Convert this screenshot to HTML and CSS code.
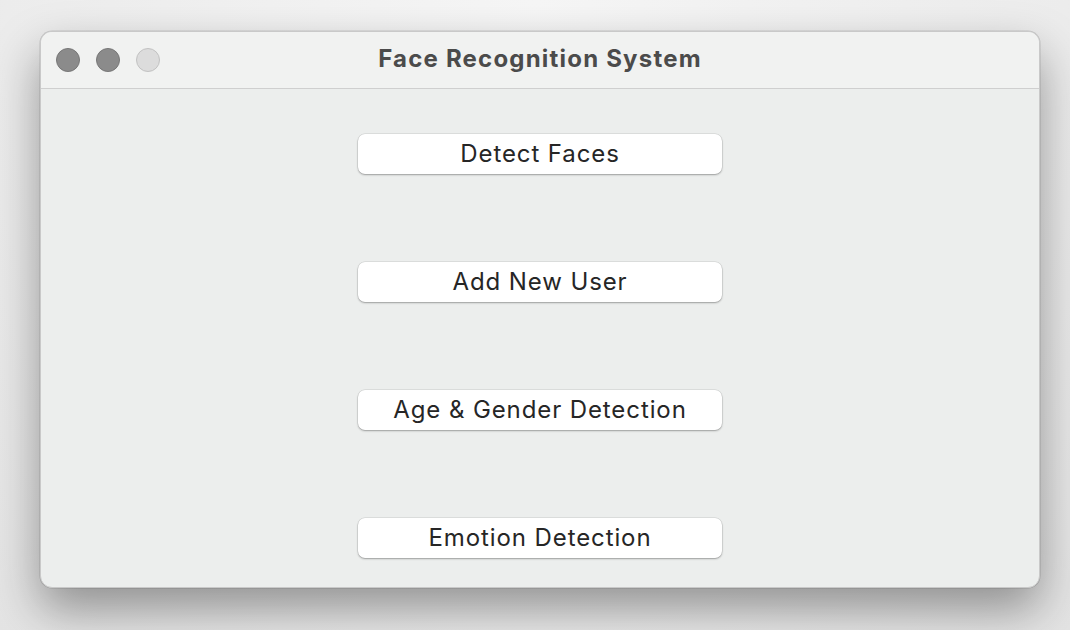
FILE: index.html
```html
<!DOCTYPE html>
<html>
<head>
<meta charset="utf-8">
<link rel="stylesheet" href="styles.css">
</head>
<body>
<div class="window">
  <div class="titlebar">
    <div class="lights">
      <span class="light dark"></span>
      <span class="light dark"></span>
      <span class="light pale"></span>
    </div>
    <div class="title">Face Recognition System</div>
  </div>
  <div class="content">
    <button class="btn">Detect Faces</button>
    <button class="btn">Add New User</button>
    <button class="btn">Age &amp; Gender Detection</button>
    <button class="btn">Emotion Detection</button>
  </div>
</div>
</body>
</html>
```
FILE: styles.css
```css
html, body {
  margin: 0;
  height: 100%;
}
body {
  background: radial-gradient(ellipse at 50% 0%, #f6f6f6 0%, #ececec 70%, #e4e4e4 100%);
  padding: 31px 0 0 40px;
  box-sizing: border-box;
  overflow: hidden;
  font-family: Inter, "Noto Sans", sans-serif;
}
.window {
  width: 1000px;
  height: 557px;
  box-sizing: border-box;
  border-radius: 12px;
  background: #eceeed;
  border: 1px solid #c9c9c9;
  box-shadow: 0 22px 48px rgba(0, 0, 0, 0.38), 0 0 0 0.5px rgba(0,0,0,0.15);
  display: flex;
  flex-direction: column;
  overflow: hidden;
}
.titlebar {
  height: 57px;
  flex: none;
  box-sizing: border-box;
  background: #f1f2f1;
  border-bottom: 1px solid #cfcfcf;
  position: relative;
  display: flex;
  align-items: center;
  justify-content: center;
}
.lights {
  position: absolute;
  left: 15px;
  top: 16px;
  display: flex;
  gap: 16px;
}
.light {
  width: 24px;
  height: 24px;
  border-radius: 50%;
  box-sizing: border-box;
}
.light.dark {
  background: #8b8b8b;
  border: 1px solid #777;
}
.light.pale {
  background: #dcdcdc;
  border: 1px solid #c2c2c2;
}
.title {
  font-weight: 700;
  font-size: 24px;
  color: #4b4b4b;
  letter-spacing: 1.2px;
  padding-bottom: 3px;
}
.content {
  flex: 1;
  display: flex;
  flex-direction: column;
  align-items: center;
  padding-top: 45px;
  gap: 88px;
}
.btn {
  width: 364px;
  height: 40px;
  background: #ffffff;
  border: none;
  border-radius: 7px;
  box-shadow: 0 1px 2px rgba(0,0,0,0.3), 0 0 0 0.5px rgba(0,0,0,0.12);
  font-family: Inter, "Noto Sans", sans-serif;
  font-size: 24px;
  letter-spacing: 0.9px;
  color: #262626;
  padding: 0 0 1px 0;
  cursor: default;
}
```
